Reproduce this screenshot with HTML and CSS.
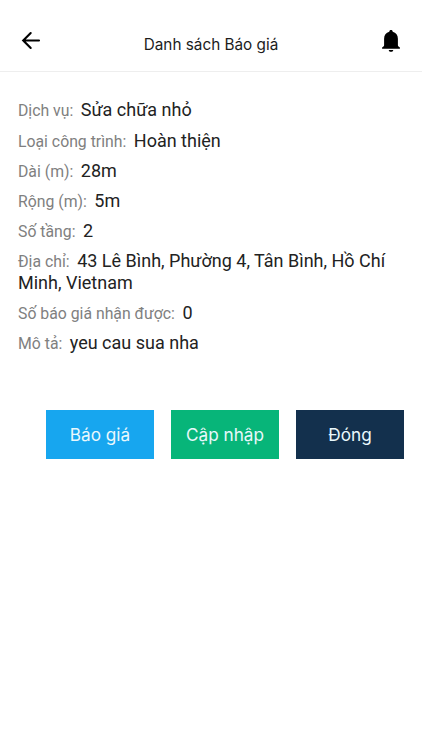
FILE: index.html
```html
<!DOCTYPE html>
<html lang="vi">
<head>
<meta charset="utf-8">
<title>Danh sách Báo giá</title>
<link rel="stylesheet" href="styles.css">
</head>
<body>
<header class="bar">
<svg class="back" viewBox="0 0 25 25"><path d="M21 12.500H5.200M12.700 5l-7.500 7.500 7.500 7.500" fill="none" stroke="#000" stroke-width="2.100" stroke-linecap="round"/></svg>
<h1 class="title">Danh sách Báo giá</h1>
<svg class="bell" viewBox="0 0 20 24"><path d="M10 1c1 0 1.700.7 1.700 1.700 3.400.8 5.200 3.500 5.200 7v6.600c0 1.100 1.100 1.800 2 2.200v1.200H1.100v-1.200c.9-.4 2-1.100 2-2.200V9.700c0-3.500 1.800-6.200 5.200-7C8.300 1.700 9 1 10 1zM7.700 20.900h4.600c-.2 1.200-1.100 1.900-2.300 1.900s-2.100-.7-2.300-1.900z"/></svg>
</header>
<main class="details">
<p class="row"><span class="label">Dịch vụ:</span> <span class="value">Sửa chữa nhỏ</span></p>
<p class="row"><span class="label">Loại công trình:</span> <span class="value">Hoàn thiện</span></p>
<p class="row"><span class="label">Dài (m):</span> <span class="value">28m</span></p>
<p class="row"><span class="label">Rộng (m):</span> <span class="value">5m</span></p>
<p class="row"><span class="label">Số tầng:</span> <span class="value">2</span></p>
<p class="row"><span class="label">Địa chỉ:</span> <span class="value">43 Lê Bình, Phường 4, Tân Bình, Hồ Chí Minh, Vietnam</span></p>
<p class="row"><span class="label">Số báo giá nhận được:</span> <span class="value">0</span></p>
<p class="row"><span class="label">Mô tả:</span> <span class="value">yeu cau sua nha</span></p>
</main>
<div class="actions">
<button class="btn quote">Báo giá</button>
<button class="btn update">Cập nhập</button>
<button class="btn close">Đóng</button>
</div>
</body>
</html>
```
FILE: styles.css
```css
* { box-sizing: border-box; }
body { margin: 0; background: #fff; font-family: Roboto, sans-serif; }
.bar { height: 72px; padding: 10px 21px 0 18px; border-bottom: 1px solid #eee; display: flex; align-items: center; justify-content: space-between; }
.back { width: 25px; height: 25px; margin-bottom: 1px; }
.bell { width: 20px; height: 24px; }
.title { margin: 8px 2px 0 0; font: 400 15.3px Inter, sans-serif; color: #1c1c1c; }
.details { padding: 27.4px 18px 0; }
.row { margin: 0 0 8.9px; font-size: 18px; line-height: 21.3px; }
.label { font-size: 15.8px; line-height: 1; color: #808080; margin-right: 3px; }
.value { color: #222; }
.actions { display: flex; gap: 17px; padding: 48.3px 18px 0 46px; }
.btn { flex: 1; height: 49px; padding: 0; border: 0; color: #e9f8fc; font: 400 17.2px Inter, sans-serif; }
.quote { background: #17a6ef; }
.update { background: #07b579; }
.close { background: #13304d; }
```
